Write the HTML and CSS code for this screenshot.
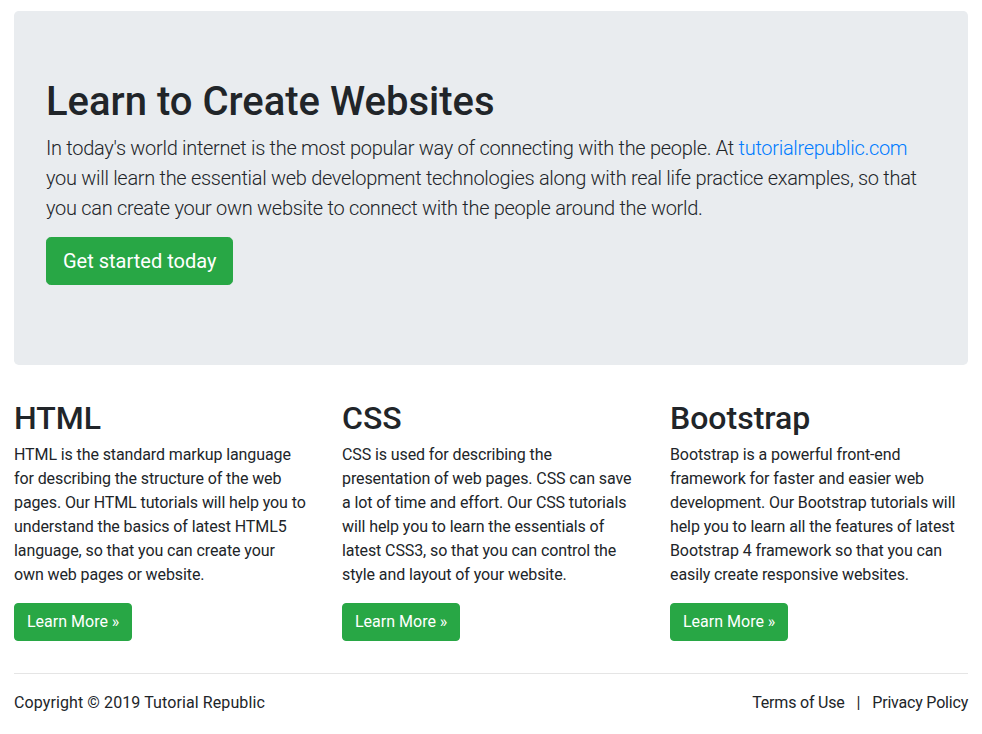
FILE: index.html
```html
<!DOCTYPE html>
<html lang="en">
<head>
<meta charset="utf-8">
<title>Tutorial Republic</title>
<link rel="stylesheet" href="styles.css">
</head>
<body>
<div class="container">
  <div class="jumbotron">
    <h1 class="jumbo-title">Learn to Create Websites</h1>
    <p class="lead">In today's world internet is the most popular way of connecting with the people. At <a href="#" class="link">tutorialrepublic.com</a> you will learn the essential web development technologies along with real life practice examples, so that you can create your own website to connect with the people around the world.</p>
    <p class="cta"><a href="#" class="btn btn-lg">Get started today</a></p>
  </div>
  <div class="row">
    <div class="col">
      <h2 class="col-title">HTML</h2>
      <p class="col-text">HTML is the standard markup language for describing the structure of the web pages. Our HTML tutorials will help you to understand the basics of latest HTML5 language, so that you can create your own&nbsp;web pages or website.</p>
      <p class="cta"><a href="#" class="btn">Learn More &raquo;</a></p>
    </div>
    <div class="col">
      <h2 class="col-title">CSS</h2>
      <p class="col-text">CSS is used for describing the presentation of web pages. CSS can save a lot of time and effort. Our CSS tutorials will help you to learn the essentials of latest CSS3, so that you can control the style and layout of your website.</p>
      <p class="cta"><a href="#" class="btn">Learn More &raquo;</a></p>
    </div>
    <div class="col">
      <h2 class="col-title">Bootstrap</h2>
      <p class="col-text">Bootstrap is a powerful front-end framework for faster and easier web development. Our Bootstrap tutorials will help you to learn all the features of latest Bootstrap 4 framework so that you can easily create responsive websites.</p>
      <p class="cta"><a href="#" class="btn">Learn More &raquo;</a></p>
    </div>
  </div>
  <hr class="divider">
  <footer class="footer">
    <p class="copyright">Copyright &copy; 2019 Tutorial Republic</p>
    <p class="footer-links"><a href="#" class="foot-link">Terms of Use</a><span class="sep">|</span><a href="#" class="foot-link">Privacy Policy</a></p>
  </footer>
</div>
</body>
</html>
```
FILE: styles.css
```css
* { box-sizing: border-box; }
html, body { margin: 0; padding: 0; }
body {
  font-family: Roboto, "Liberation Sans", sans-serif;
  font-size: 16px;
  line-height: 1.5;
  color: #212529;
  background: #fff;
  letter-spacing: -0.1px;
}
.container {
  width: 982px;
  padding: 11px 14px 0;
}
.jumbotron {
  background: #e9ecef;
  border-radius: 4.8px;
  padding: 64px 32px;
  margin-bottom: 32px;
}
.jumbo-title {
  margin: 0 0 5px;
  padding-top: 3px;
  font-size: 40px;
  font-weight: 500;
  line-height: 1.2;
  letter-spacing: 0;
}
.lead {
  margin: 0 0 14px;
  padding-top: 2px;
  font-size: 20px;
  font-weight: 300;
  line-height: 1.5;
  letter-spacing: -0.3px;
}
.link { color: #007bff; text-decoration: none; }
.cta { margin: 0 0 16px; }
.btn {
  display: inline-block;
  background: #28a745;
  border: 1px solid #28a745;
  color: #fff;
  text-decoration: none;
  font-size: 16px;
  line-height: 1.5;
  padding: 6px 12px;
  border-radius: 4px;
  letter-spacing: 0;
}
.btn-lg {
  font-size: 20px;
  padding: 8px 16px;
  border-radius: 4.8px;
}
.row {
  display: grid;
  grid-template-columns: repeat(3, 1fr);
  column-gap: 30px;
}
.col-title {
  margin: 0 0 6px;
  padding-top: 2px;
  font-size: 32px;
  font-weight: 500;
  line-height: 1.2;
  letter-spacing: 0;
}
.col-text { margin: 0 0 16px; }
.divider {
  margin: 16px 0;
  border: 0;
  border-top: 1px solid rgba(0,0,0,.1);
}
.footer {
  display: flex;
  justify-content: space-between;
  align-items: center;
}
.copyright, .footer-links { margin: 0 0 16px; padding-top: 1px; }
.copyright { letter-spacing: 0.1px; }
.footer-links { display: flex; align-items: center; letter-spacing: -0.2px; }
.foot-link { color: #212529; text-decoration: none; }
.sep { margin: 0 12px; color: #212529; }
```
